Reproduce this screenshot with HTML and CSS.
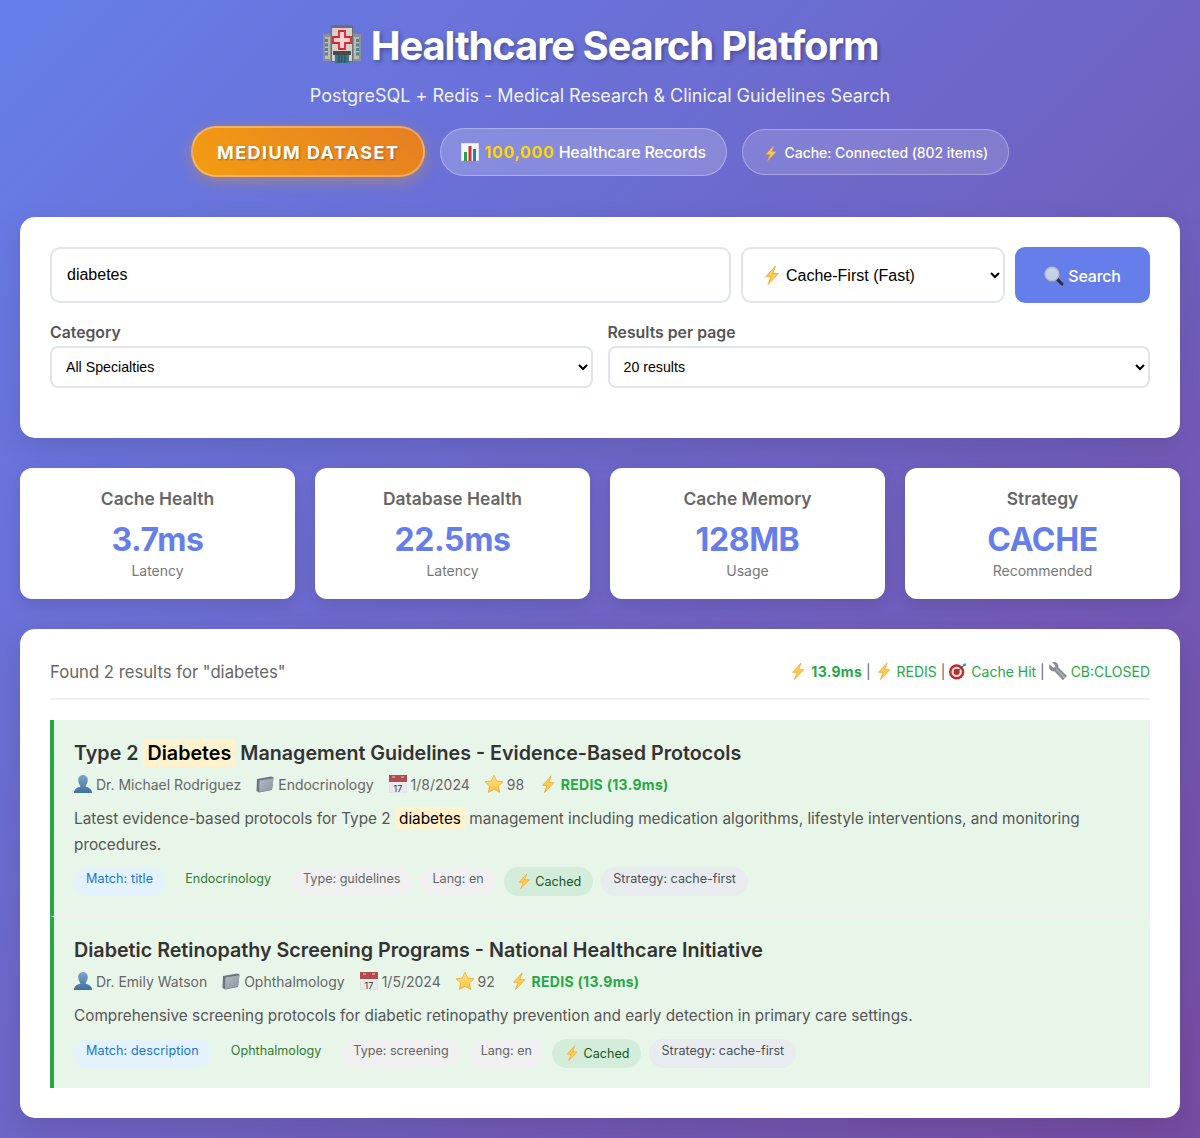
FILE: index.html
```html
<!DOCTYPE html>
<html lang="en">
<head>
    <meta charset="UTF-8">
    <meta name="viewport" content="width=device-width, initial-scale=1.0">
    <title>Healthcare Search Platform</title>
    <link rel="stylesheet" href="styles.css">
</head>
<body>
    <!-- Icon sprites -->
    <svg class="sprites" width="0" height="0">
        <defs>
            <linearGradient id="g-star" x1="0" y1="0" x2="0" y2="1">
                <stop offset="0" stop-color="#ffe98a"/>
                <stop offset="1" stop-color="#fbc23b"/>
            </linearGradient>
            <linearGradient id="g-person" x1="0" y1="0" x2="0" y2="1">
                <stop offset="0" stop-color="#7fa6c9"/>
                <stop offset="1" stop-color="#3f6f9b"/>
            </linearGradient>
            <linearGradient id="g-folder" x1="0" y1="0" x2="1" y2="1">
                <stop offset="0" stop-color="#b4bcc4"/>
                <stop offset="1" stop-color="#8a95a0"/>
            </linearGradient>
            <symbol id="i-hospital" viewBox="0 0 40 40">
                <rect x="1" y="10" width="38" height="27" fill="#8f918f"/>
                <rect x="3" y="13" width="5" height="22" fill="#b9bab6"/>
                <rect x="32" y="13" width="5" height="22" fill="#b9bab6"/>
                <path d="M4.500 15v17M35.500 15v17" stroke="#4f8496" stroke-width="3" stroke-dasharray="3 1.500"/>
                <rect x="9" y="1" width="22" height="37" fill="#6e6f6d"/>
                <rect x="10" y="4" width="20" height="33" fill="#d3d1cb"/>
                <path d="M17 7h6v6h6v6h-6v6h-6v-6h-6v-6h6z" fill="#f4d5d2" stroke="#e2232e" stroke-width="1.800"/>
                <rect x="11" y="27" width="18" height="4" fill="#4b4b49"/>
                <rect x="13" y="31" width="14" height="8" fill="#3f7488"/>
                <path d="M17 31v8M20 31v8M23 31v8" stroke="#23485a" stroke-width="1"/>
            </symbol>
            <symbol id="i-chart" viewBox="1 1 18 18">
                <rect x="1" y="1" width="18" height="18" fill="#f4f6f8" stroke="#c3c9ce" stroke-width=".8"/>
                <rect x="4" y="10" width="3" height="9" fill="#2b9e4c"/>
                <rect x="8.500" y="4" width="3" height="15" fill="#d3322f"/>
                <rect x="13" y="7" width="3" height="12" fill="#2878c8"/>
            </symbol>
            <symbol id="i-bolt" viewBox="0 0 20 20">
                <path d="M13.500 1 4 11.500h5L6 19.500l10.500-11h-5.700z" fill="#ffcf4a" stroke="#f59e2c" stroke-width=".8" stroke-linejoin="round"/>
            </symbol>
            <symbol id="i-search" viewBox="0 0 20 20">
                <path d="M12.500 12.500 18 18" stroke="#2d2d30" stroke-width="3" stroke-linecap="round"/>
                <circle cx="8" cy="8" r="6.800" fill="#c5d2ee" stroke="#b7bcc4" stroke-width="1.600"/>
            </symbol>
            <symbol id="i-target" viewBox="0 0 20 20">
                <circle cx="8.500" cy="11" r="8.500" fill="#c9252d"/>
                <circle cx="8.500" cy="11" r="5.800" fill="#f4ece4"/>
                <circle cx="8.500" cy="11" r="3.400" fill="#c9252d"/>
                <path d="M8.500 11 17 3.500" stroke="#555" stroke-width="1.200"/>
                <path d="M15 3l3-2 1.500 3-3 1z" fill="#35a0c8"/>
            </symbol>
            <symbol id="i-wrench" viewBox="0 0 20 20">
                <path d="M.8 3.200 4.500 6.800l2.300-.6.6-2.400L3.800.2C7-.8 10.800 1.800 10 6L19.600 15.600 15.600 19.600 6 10C2 10.800-.8 7 .8 3.200z" fill="#8b9096" stroke="#5f6368" stroke-width=".5"/>
                <path d="M8 8l9.500 9.500" stroke="#b9bdc1" stroke-width="1.200"/>
            </symbol>
            <symbol id="i-person" viewBox="1 1 18 18">
                <path d="M10 1c3 0 4.800 2.200 4.800 5S13 11.500 12.500 12.500c2.800 1 6.500 2 6.500 6.500H1c0-4.500 3.700-5.500 6.500-6.500C7 11.500 5.200 8.800 5.200 6S7 1 10 1z" fill="url(#g-person)"/>
            </symbol>
            <symbol id="i-folder" viewBox="1 1 18 18">
                <path d="M2 5 16 2.500l2.500.8L17 16 4 18.500 1.500 17z" fill="#69757f"/>
                <path d="M4.500 6.500 18.500 4.300 17 15.500 4 18z" fill="url(#g-folder)"/>
            </symbol>
            <symbol id="i-calendar" viewBox="1 1 18 18">
                <rect x="1" y="1" width="18" height="18" fill="#e8eaec" stroke="#ccc" stroke-width=".5"/>
                <rect x="1" y="1" width="18" height="7" fill="#b34a4f"/>
                <path d="M4 3h3M13 3h3" stroke="#e9c5c6" stroke-width="1"/>
                <text x="10" y="17.500" class="cal-num">17</text>
            </symbol>
            <symbol id="i-star" viewBox="1 1 18 18">
                <path d="M10 1.200 12.700 7l6.300.8-4.600 4.300 1.200 6.300L10 15.300l-5.600 3.100 1.200-6.300L1 7.800 7.300 7z" fill="url(#g-star)" stroke="#f0a01e" stroke-width=".7" stroke-linejoin="round"/>
            </symbol>
        </defs>
    </svg>

    <header class="page-header">
        <h1 class="main-heading"><svg class="icon-title"><use href="#i-hospital"/></svg><span class="heading-text">Healthcare Search Platform</span></h1>
        <p class="subtitle">PostgreSQL + Redis - Medical Research &amp; Clinical Guidelines Search</p>
        <div class="badges">
            <span class="badge-dataset">MEDIUM DATASET</span>
            <span class="badge-records"><svg class="icon"><use href="#i-chart"/></svg> <b>100,000</b> Healthcare Records</span>
            <span class="badge-cache"><svg class="icon-sm"><use href="#i-bolt"/></svg> Cache: Connected (802 items)</span>
        </div>
    </header>

    <!-- Search -->
    <section class="card search-card">
        <div class="search-row">
            <input class="search-input" type="text" value="diabetes">
            <div class="strategy-wrap">
                <select class="strategy-select">
                    <option>Cache-First (Fast)</option>
                </select>
                <svg class="strategy-icon"><use href="#i-bolt"/></svg>
            </div>
            <button class="btn"><svg class="icon"><use href="#i-search"/></svg> Search</button>
        </div>
        <div class="filter-row">
            <div class="filter">
                <label>Category</label>
                <select><option>All Specialties</option></select>
            </div>
            <div class="filter">
                <label>Results per page</label>
                <select><option>20 results</option></select>
            </div>
        </div>
    </section>

    <!-- Stats -->
    <section class="stats">
        <div class="stat">
            <h3>Cache Health</h3>
            <div class="stat-value">3.7ms</div>
            <div class="stat-label">Latency</div>
        </div>
        <div class="stat">
            <h3>Database Health</h3>
            <div class="stat-value">22.5ms</div>
            <div class="stat-label">Latency</div>
        </div>
        <div class="stat">
            <h3>Cache Memory</h3>
            <div class="stat-value">128MB</div>
            <div class="stat-label">Usage</div>
        </div>
        <div class="stat">
            <h3>Strategy</h3>
            <div class="stat-value">CACHE</div>
            <div class="stat-label">Recommended</div>
        </div>
    </section>

    <!-- Results -->
    <section class="card results-card">
        <div class="results-head">
            <div class="results-count">Found 2 results for "diabetes"</div>
            <div class="results-perf">
                <svg class="icon"><use href="#i-bolt"/></svg> <b>13.9ms</b> <i>|</i>
                <svg class="icon"><use href="#i-bolt"/></svg> REDIS <i>|</i>
                <svg class="icon"><use href="#i-target"/></svg> Cache Hit <i>|</i>
                <svg class="icon"><use href="#i-wrench"/></svg> CB:CLOSED
            </div>
        </div>

        <article class="result">
            <h3>Type 2 <mark>Diabetes</mark> Management Guidelines - Evidence-Based Protocols</h3>
            <div class="meta">
                <span><svg class="icon"><use href="#i-person"/></svg> Dr. Michael Rodriguez</span>
                <span><svg class="icon"><use href="#i-folder"/></svg> Endocrinology</span>
                <span><svg class="icon"><use href="#i-calendar"/></svg> 1/8/2024</span>
                <span><svg class="icon"><use href="#i-star"/></svg> 98</span>
                <span class="meta-source"><svg class="icon"><use href="#i-bolt"/></svg> REDIS (13.9ms)</span>
            </div>
            <p>Latest evidence-based protocols for Type 2 <mark>diabetes</mark> management including medication algorithms, lifestyle interventions, and monitoring procedures.</p>
            <div class="tags">
                <span class="tag tag-match">Match: title</span>
                <span class="tag tag-spec">Endocrinology</span>
                <span class="tag">Type: guidelines</span>
                <span class="tag">Lang: en</span>
                <span class="tag tag-cached"><svg class="icon-sm"><use href="#i-bolt"/></svg> Cached</span>
                <span class="tag tag-strategy">Strategy: cache-first</span>
            </div>
        </article>

        <article class="result">
            <h3>Diabetic Retinopathy Screening Programs - National Healthcare Initiative</h3>
            <div class="meta">
                <span><svg class="icon"><use href="#i-person"/></svg> Dr. Emily Watson</span>
                <span><svg class="icon"><use href="#i-folder"/></svg> Ophthalmology</span>
                <span><svg class="icon"><use href="#i-calendar"/></svg> 1/5/2024</span>
                <span><svg class="icon"><use href="#i-star"/></svg> 92</span>
                <span class="meta-source"><svg class="icon"><use href="#i-bolt"/></svg> REDIS (13.9ms)</span>
            </div>
            <p>Comprehensive screening protocols for diabetic retinopathy prevention and early detection in primary care settings.</p>
            <div class="tags">
                <span class="tag tag-match">Match: description</span>
                <span class="tag tag-spec">Ophthalmology</span>
                <span class="tag">Type: screening</span>
                <span class="tag">Lang: en</span>
                <span class="tag tag-cached"><svg class="icon-sm"><use href="#i-bolt"/></svg> Cached</span>
                <span class="tag tag-strategy">Strategy: cache-first</span>
            </div>
        </article>
    </section>
</body>
</html>
```

FILE: styles.css
```css
* {
    margin: 0;
    padding: 0;
    box-sizing: border-box;
}
body {
    font-family: Inter, "Liberation Sans", sans-serif;
    background: linear-gradient(135deg, #667eea 0%, #764ba2 100%);
    min-height: 1138px;
    padding: 20px;
    color: #333;
}
.sprites {
    position: absolute;
}
.cal-num {
    font-family: Inter, sans-serif;
    font-size: 9px;
    text-anchor: middle;
    fill: #333;
}
.icon {
    width: 18px;
    height: 18px;
    vertical-align: -3px;
}
.icon-sm {
    width: 16px;
    height: 16px;
    vertical-align: -3px;
}
.icon-title {
    width: 40px;
    height: 40px;
    vertical-align: -4px;
    margin-right: 9px;
}

/* Header */
.page-header {
    text-align: center;
    color: #fff;
    margin-bottom: 40px;
}
.main-heading {
    font-size: 40px;
    line-height: 48px;
    font-weight: 700;
    letter-spacing: -1.13px;
    text-shadow: 2px 2px 4px rgba(0, 0, 0, 0.3);
    margin-bottom: 15px;
    margin-top: 2px;
}
.subtitle {
    font-size: 18px;
    line-height: 22px;
    letter-spacing: -0.03px;
    opacity: 0.9;
    margin-bottom: 19px;
}
.badges {
    display: flex;
    justify-content: center;
    align-items: center;
    gap: 15px;
}
.badge-dataset {
    background: linear-gradient(45deg, #f39c12, #e67e22);
    border: 2px solid rgba(255, 255, 255, 0.3);
    border-radius: 25px;
    padding: 0 24px;
    height: 51px;
    line-height: 49px;
    font-size: 18px;
    font-weight: 700;
    letter-spacing: 1.43px;
    text-shadow: 1px 1px 2px rgba(0, 0, 0, 0.3);
    box-shadow: 0 4px 15px rgba(243, 156, 18, 0.4);
}
.badge-records {
    background: rgba(255, 255, 255, 0.2);
    border: 1px solid rgba(255, 255, 255, 0.3);
    border-radius: 25px;
    padding: 0 20px;
    height: 48px;
    line-height: 47px;
    font-size: 16px;
    font-weight: 500;
    letter-spacing: -0.2px;
}
.badge-records b {
    color: #ffd700;
    font-weight: 700;
    letter-spacing: 0.7px;
}
.badge-records .icon {
    margin-right: 1px;
}
.badge-cache {
    background: rgba(255, 255, 255, 0.15);
    border: 1px solid rgba(255, 255, 255, 0.3);
    border-radius: 25px;
    padding: 0 20px;
    height: 46px;
    line-height: 45px;
    font-size: 14px;
    font-weight: 500;
    letter-spacing: -0.05px;
}
.badge-cache .icon-sm {
    margin-right: 2px;
}

/* Cards */
.card {
    background: #fff;
    border-radius: 15px;
    padding: 30px;
    box-shadow: 0 10px 30px rgba(0, 0, 0, 0.1);
}
.search-card {
    height: 221px;
    margin-bottom: 30px;
}
.search-row {
    display: flex;
    gap: 10px;
    margin-bottom: 20px;
}
.search-input {
    flex: 1;
    height: 56px;
    padding: 0 15px;
    border: 2px solid #e1e5e9;
    border-radius: 10px;
    font-family: "Liberation Sans", sans-serif;
    font-size: 16px;
    color: #000;
}
.strategy-wrap {
    position: relative;
    width: 264px;
}
.strategy-select {
    width: 100%;
    height: 56px;
    padding-left: 39px;
    border: 2px solid #e1e5e9;
    border-radius: 10px;
    background: #fff;
    font-family: "Liberation Sans", sans-serif;
    font-size: 16px;
    color: #000;
}
.strategy-icon {
    position: absolute;
    left: 21px;
    top: 18px;
    width: 20px;
    height: 20px;
}
.btn {
    width: 135px;
    height: 56px;
    padding-top: 2px;
    background: #667eea;
    color: #fff;
    border: none;
    border-radius: 10px;
    font-family: Inter, sans-serif;
    font-size: 16px;
    font-weight: 500;
    letter-spacing: -0.2px;
}
.btn .icon {
    width: 20px;
    height: 20px;
    vertical-align: -4px;
}
.filter-row {
    display: grid;
    grid-template-columns: 1fr 1fr;
    gap: 15px;
}
.filter label {
    display: block;
    font-size: 15.8px;
    line-height: 19px;
    font-weight: 600;
    color: #555;
    margin-bottom: 4px;
}
.filter select {
    width: 100%;
    height: 42px;
    padding: 0 10px;
    border: 2px solid #e1e5e9;
    border-radius: 8px;
    background: #fff;
    font-family: "Liberation Sans", sans-serif;
    font-size: 14.2px;
    color: #000;
}

/* Stats */
.stats {
    display: grid;
    grid-template-columns: repeat(4, 1fr);
    gap: 20px;
    margin-bottom: 30px;
}
.stat {
    height: 131px;
    background: #fff;
    border-radius: 12px;
    padding-top: 20px;
    text-align: center;
    box-shadow: 0 5px 15px rgba(0, 0, 0, 0.1);
}
.stat h3 {
    font-size: 17.4px;
    line-height: 22px;
    font-weight: 600;
    color: #666;
    margin-bottom: 10px;
}
.stat-value {
    font-size: 32px;
    line-height: 39px;
    font-weight: 700;
    letter-spacing: -0.4px;
    color: #667eea;
    margin-bottom: 3px;
}
.stat-label {
    font-size: 14px;
    line-height: 17px;
    color: #777;
}

/* Results */
.results-head {
    display: flex;
    justify-content: space-between;
    align-items: center;
    box-sizing: content-box;
    height: 24px;
    padding: 1px 0 14px;
    border-bottom: 2px solid #f0f0f0;
    margin-bottom: 20px;
}
.results-count {
    font-size: 16.7px;
    color: #666;
}
.results-perf {
    font-size: 14px;
    color: #28a745;
    margin-top: -2px;
}
.results-perf b {
    font-weight: 700;
    letter-spacing: 0.3px;
}
.results-perf i {
    font-style: normal;
    color: #666;
}
.result {
    background: #e8f5e9;
    border-left: 4px solid #28a745;
    border-bottom: 1px solid #f0f0f0;
    padding: 20px;
}
.result:last-child {
    border-bottom: none;
}
.result h3 {
    font-size: 19.7px;
    line-height: 26px;
    font-weight: 600;
    color: #333;
    margin-bottom: 9px;
}
mark {
    background: #fff3cd;
    color: #000;
    padding: 2px 4px;
    border-radius: 3px;
}
.meta {
    display: flex;
    gap: 15px;
    font-size: 14px;
    line-height: 20px;
    color: #666;
    margin-bottom: 11px;
}
.meta-source {
    color: #28a745;
    font-weight: 700;
    letter-spacing: 0.3px;
}
.result p {
    font-size: 15.33px;
    line-height: 25.84px;
    color: #555;
    margin-bottom: 9.6px;
}
.tags {
    display: flex;
    gap: 8px;
}
.tag {
    height: 29px;
    padding: 4px 12px;
    border-radius: 15px;
    background: #f0f0f0;
    color: #666;
    font-size: 12.6px;
    line-height: 16px;
}
.tag-match {
    background: #e3f2fd;
    color: #1976d2;
    letter-spacing: 0.1px;
}
.tag-spec {
    background: #e8f5e9;
    color: #2e7d32;
}
.tag-cached {
    background: #d4edda;
    color: #155724;
    line-height: 22px;
}
.tag-strategy {
    background: #e9ecef;
    color: #495057;
}
```
